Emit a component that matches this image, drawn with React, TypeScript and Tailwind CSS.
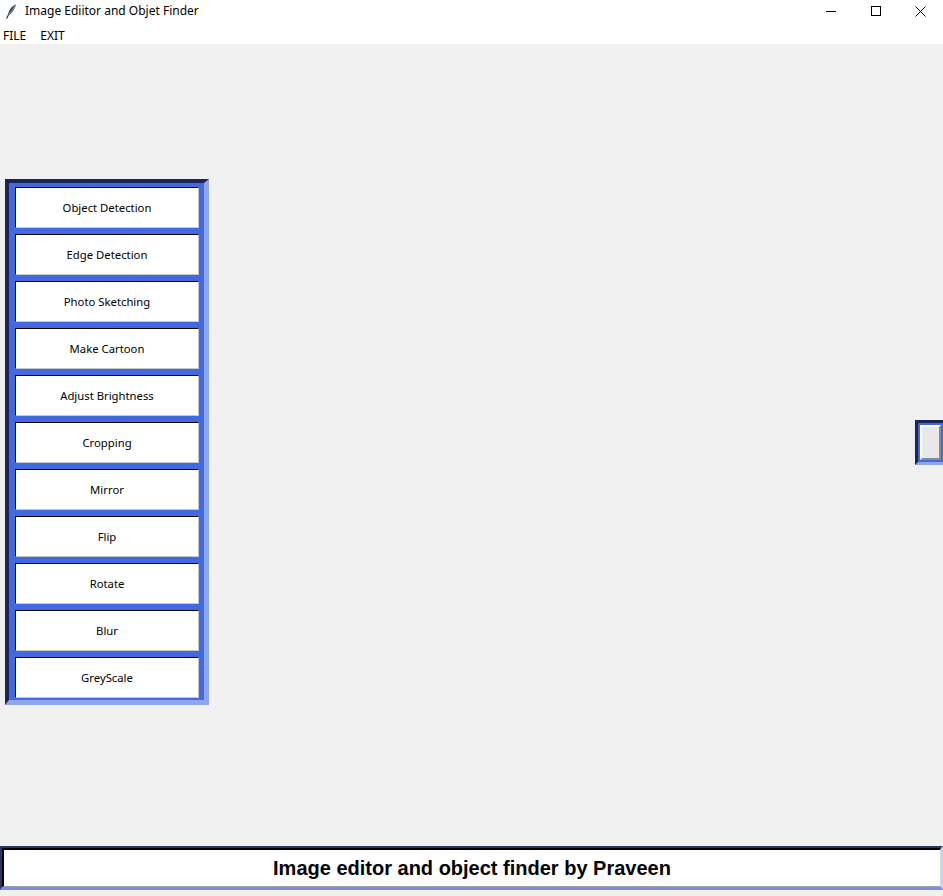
const tools = [
  'Object Detection',
  'Edge Detection',
  'Photo Sketching',
  'Make Cartoon',
  'Adjust Brightness',
  'Cropping',
  'Mirror',
  'Flip',
  'Rotate',
  'Blur',
  'GreyScale',
]

function Feather() {
  return (
    <svg width="12" height="15" viewBox="0 0 12 15" className="shrink-0">
      <path d="M11 0.5 C7.5 1.5 4 5 3 10.5 L4.6 11 C7.5 8 10 4.5 11 0.5 Z" fill="#3d4858" />
      <path d="M10.4 1.6 C8 5 6 8 3.8 10.6" stroke="#9aa5b5" strokeWidth="0.8" fill="none" />
      <path d="M3.6 10.6 L1.6 14.6" stroke="#2a2a2a" strokeWidth="1.2" />
    </svg>
  )
}

function TitleBar() {
  return (
    <div className="flex h-[22px] items-center bg-white">
      <div className="flex items-center gap-[8px] pl-[5px]">
        <Feather />
        <span className="text-[12px] text-black">Image Ediitor and Objet Finder</span>
      </div>
      <div className="ml-auto flex h-full items-center">
        <div className="flex h-full w-[45px] items-center justify-center">
          <div className="h-px w-[10px] bg-black" />
        </div>
        <div className="flex h-full w-[45px] items-center justify-center">
          <div className="h-[10px] w-[10px] border border-black" />
        </div>
        <div className="flex h-full w-[45px] items-center justify-center">
          <svg width="11" height="11" viewBox="0 0 11 11">
            <path d="M0.5 0.5 L10.5 10.5 M10.5 0.5 L0.5 10.5" stroke="#000" strokeWidth="1" />
          </svg>
        </div>
      </div>
    </div>
  )
}

export default function App() {
  return (
    <div
      className="flex h-[896px] w-[943px] flex-col overflow-hidden bg-[#f0f0f0]"
      style={{ fontFamily: '"Segoe UI", "Noto Sans", "Open Sans", sans-serif' }}
    >
      <TitleBar />
      <div className="flex h-[22px] items-end gap-[14px] bg-white pb-[2px] pl-[3px] text-[12px] leading-none text-black">
        <span>FILE</span>
        <span>EXIT</span>
      </div>

      <div className="flex flex-1 items-start">
        <div className="ml-[5px] mt-[135px] border-l-4 border-t-4 border-r-[5px] border-b-[5px] border-l-[#1b2452] border-t-[#1b2452] border-r-[#8ea6ee] border-b-[#8ea6ee] bg-[#4169e1] pb-[2px] pl-[6px] pr-[5px] pt-[4px]">
          <div className="flex flex-col gap-[6px]">
            {tools.map((t) => (
              <button
                key={t}
                type="button"
                className="flex h-[41px] w-[184px] items-center justify-center border border-l-black border-t-black border-r-[#c8c8c8] border-b-[#c8c8c8] bg-white pt-[2px] text-[11.3px] text-black"
              >
                {t}
              </button>
            ))}
          </div>
        </div>

        <div className="ml-auto mt-[376px] h-[45px] w-[28px] border-l-[3px] border-t-[3px] border-r-0 border-b-[3px] border-l-[#1b2452] border-t-[#1b2452] border-b-[#8ea6ee] bg-[#4169e1] p-[2px]">
          <div className="h-full w-[21px] border-2 border-l-white border-t-white border-r-[#8a8a8a] border-b-[#8a8a8a] bg-[#e8e8e8]" />
        </div>
      </div>

      <div className="mb-[6px] h-[44px] border-l-2 border-t-2 border-r-2 border-b-[3px] border-l-[#2a3766] border-t-[#2a3766] border-r-[#c8d2f2] border-b-[#7890dc]">
        <div className="flex h-full items-center justify-center border-l-2 border-t-2 border-r border-b border-l-black border-t-black border-r-[#d8d8d8] border-b-[#a0a0a0] bg-white">
          <span
            className="text-[20px] font-bold text-black"
            style={{ fontFamily: '"Liberation Sans", Arial, sans-serif' }}
          >
            Image editor and object finder by Praveen
          </span>
        </div>
      </div>
    </div>
  )
}
